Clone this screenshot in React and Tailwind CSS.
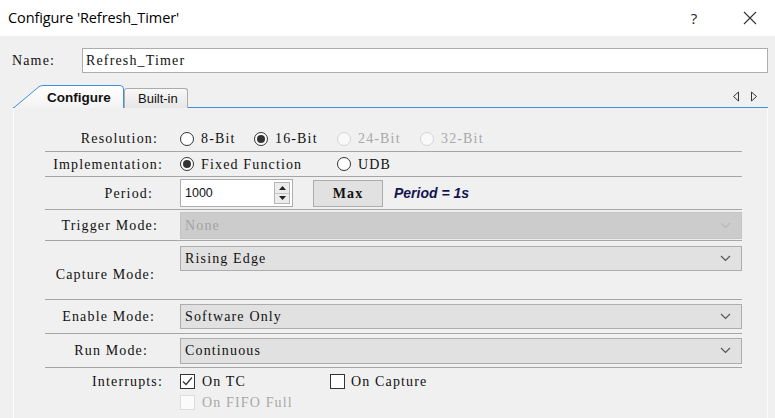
import React from "react";

const mono = "font-['Liberation_Serif',serif] text-[14px] tracking-[1.15px] text-[#111]";

function Radio({ checked, disabled }) {
  return (
    <span
      className={`w-[14px] h-[14px] rounded-full border flex items-center justify-center shrink-0 ${
        disabled ? "border-[#d4d4d4] bg-[#f9f9f9]" : "border-[#333333] bg-white"
      }`}
    >
      {checked && <span className="w-[8px] h-[8px] rounded-full bg-[#333333]" />}
    </span>
  );
}

function RadioItem({ label, checked, disabled, w }) {
  return (
    <div className={`flex items-center gap-[7px] ${w}`}>
      <Radio checked={checked} disabled={disabled} />
      <span className={disabled ? "text-[#a8a8a8]" : ""}>{label}</span>
    </div>
  );
}

function Check({ checked, disabled }) {
  return (
    <span
      className={`w-[15px] h-[15px] border flex items-center justify-center shrink-0 ${
        disabled ? "border-[#dcdcdc] bg-[#fbfbfb]" : "border-[#333333] bg-white"
      }`}
    >
      {checked && (
        <svg width="11" height="11" viewBox="0 0 11 11">
          <path d="M1 5.5 L4 8.5 L10 1.5" fill="none" stroke="#333" strokeWidth="1.2" />
        </svg>
      )}
    </span>
  );
}

function Chevron({ light }) {
  return (
    <svg width="11" height="7" viewBox="0 0 11 7">
      <path
        d="M1 1 L5.5 5.5 L10 1"
        fill="none"
        stroke={light ? "#b8b8b8" : "#555"}
        strokeWidth="1.2"
      />
    </svg>
  );
}

function Select({ value, disabled, h }) {
  return (
    <div
      className={`${h} w-full border flex items-center justify-between pl-[4px] pr-[10px] ${
        disabled ? "bg-[#cccccc] border-[#c4c4c4] text-[#a3a3a3]" : "bg-[#e1e1e1] border-[#adadad]"
      }`}
    >
      <span>{value}</span>
      <Chevron light={disabled} />
    </div>
  );
}

function Row({ label, pr, h, children, align = "items-center", labelClass = "" }) {
  return (
    <div className={`flex ${align} ${h} border-b border-[#a6a6a6]`}>
      <div className={`w-[135px] shrink-0 text-right ${pr} ${labelClass}`}>{label}</div>
      <div className="flex-1 flex items-center">{children}</div>
    </div>
  );
}

export default function App() {
  return (
    <div className="w-[775px] h-[418px] overflow-hidden bg-[#f0f0f0] flex flex-col">
      {/* Title bar */}
      <div className="h-[36px] shrink-0 bg-white flex items-center pl-[8px]">
        <span className="flex-1 font-['Open_Sans',sans-serif] text-[14.5px] text-black tracking-[-0.1px]">
          Configure 'Refresh_Timer'
        </span>
        <span className="w-[14px] mr-[42px] font-['Open_Sans',sans-serif] text-[15px] text-[#222] text-center">?</span>
        <svg width="14" height="14" viewBox="0 0 14 14" className="mr-[18px]">
          <path d="M1 1 L13 13 M13 1 L1 13" stroke="#333" strokeWidth="1.1" />
        </svg>
      </div>

      {/* Name row */}
      <div className={`flex items-center mt-[12px] h-[25px] pl-[12px] pr-[7px] ${mono}`}>
        <span className="w-[70px]">Name:</span>
        <div className="flex-1 h-[25px] bg-white border border-[#adadad] flex items-center pl-[3px]">
          Refresh_Timer
        </div>
      </div>

      {/* Tabs */}
      <div className="ml-[13px] mr-[7px] mt-[12px] h-[23px] shrink-0 flex items-end border-b border-[#3d8fe0] relative">
        <div className="relative w-[111px] h-[23px] -mb-[1px]">
          <svg width="111" height="23" viewBox="0 0 111 23" className="absolute inset-0">
            <defs>
              <linearGradient id="tg" x1="0" y1="0" x2="0" y2="1">
                <stop offset="0" stopColor="#ffffff" />
                <stop offset="1" stopColor="#f3f3f3" />
              </linearGradient>
            </defs>
            <path
              d="M0.5 23 L25 2.5 Q27 0.5 30 0.5 L107 0.5 Q110.5 0.5 110.5 4 L110.5 23"
              fill="url(#tg)"
              stroke="#3d8fe0"
              strokeWidth="1"
            />
          </svg>
          <span className="absolute left-[34px] top-[3px] font-['Liberation_Sans',sans-serif] font-bold text-[13.5px] text-[#111]">
            Configure
          </span>
        </div>
        <div className="w-[64px] h-[20px] -mb-[1px] rounded-t-[3px] border border-b-0 border-[#acacac] bg-gradient-to-b from-[#f8f8f8] to-[#e6e6e6] flex items-center pl-[13px] font-['Liberation_Sans',sans-serif] text-[13px] text-[#111]">
          Built-in
        </div>
        <div className="absolute right-[10px] top-[6px] flex gap-[10px]">
          <svg width="8" height="11" viewBox="0 0 8 11">
            <path d="M6.5 1 L1.5 5.5 L6.5 10 Z" fill="none" stroke="#333" strokeWidth="1" />
          </svg>
          <svg width="8" height="11" viewBox="0 0 8 11">
            <path d="M1.5 1 L6.5 5.5 L1.5 10 Z" fill="none" stroke="#333" strokeWidth="1" />
          </svg>
        </div>
      </div>

      {/* Panel */}
      <div className={`ml-[13px] mr-[7px] flex-1 border-l border-r border-[#fbfbfb] pt-[18px] pl-[31px] pr-[25px] ${mono}`}>
        <Row label="Resolution:" pr="pr-[22px]" h="h-[26px]">
          <RadioItem label="8-Bit" w="w-[74px]" />
          <RadioItem label="16-Bit" checked w="w-[83px]" />
          <RadioItem label="24-Bit" disabled w="w-[83px]" />
          <RadioItem label="32-Bit" disabled w="" />
        </Row>
        <Row label="Implementation:" pr="pr-[17px]" h="h-[25px]">
          <RadioItem label="Fixed Function" checked w="w-[157px]" />
          <RadioItem label="UDB" w="" />
        </Row>
        <Row label="Period:" pr="pr-[27px]" h="h-[33px]">
          <div className="w-[113px] h-[28px] bg-white border border-[#adadad] flex items-center justify-between pl-[4px] pr-[2px]">
            <span className="font-['Liberation_Sans',sans-serif] text-[12.5px] tracking-normal text-[#111]">1000</span>
            <div className="flex flex-col w-[16px] h-[22px] border border-[#b5b5b5]">
              <div className="flex-1 bg-[#ececec] flex items-center justify-center border-b border-[#c4c4c4]">
                <svg width="7" height="4" viewBox="0 0 7 4"><path d="M0 4 L3.5 0 L7 4 Z" fill="#222" /></svg>
              </div>
              <div className="flex-1 bg-[#ececec] flex items-center justify-center">
                <svg width="7" height="4" viewBox="0 0 7 4"><path d="M0 0 L3.5 4 L7 0 Z" fill="#222" /></svg>
              </div>
            </div>
          </div>
          <div className="ml-[20px] w-[70px] h-[27px] bg-[#e1e1e1] border border-[#adadad] flex items-center justify-center font-bold">
            Max
          </div>
          <span className="ml-[11px] font-['Liberation_Sans',sans-serif] font-bold italic text-[14px] tracking-normal text-[#141450]">
            Period = 1s
          </span>
        </Row>
        <Row label="Trigger Mode:" pr="pr-[22px]" h="h-[31px]">
          <Select value="None" disabled h="h-[27px]" />
        </Row>
        <Row label="Capture Mode:" pr="pr-[25px]" h="h-[59px]" align="items-start" labelClass="pt-[23px]">
          <div className="w-full pt-[5px]">
            <Select value="Rising Edge" h="h-[25px]" />
          </div>
        </Row>
        <Row label="Enable Mode:" pr="pr-[25px]" h="h-[34px]">
          <Select value="Software Only" h="h-[25px]" />
        </Row>
        <Row label="Run Mode:" pr="pr-[32px]" h="h-[34px]">
          <Select value="Continuous" h="h-[26px]" />
        </Row>
        <div className="flex pt-[3px]">
          <div className="w-[135px] shrink-0 text-right pr-[17px] h-[21px] flex items-center justify-end">Interrupts:</div>
          <div className="flex flex-col">
            <div className="flex items-center h-[21px]">
              <div className="w-[150px] flex items-center gap-[7px]">
                <Check checked />
                <span>On TC</span>
              </div>
              <div className="flex items-center gap-[6px]">
                <Check />
                <span>On Capture</span>
              </div>
            </div>
            <div className="flex items-center h-[21px] gap-[7px]">
              <Check disabled />
              <span className="text-[#a8a8a8]">On FIFO Full</span>
            </div>
          </div>
        </div>
      </div>
    </div>
  );
}
